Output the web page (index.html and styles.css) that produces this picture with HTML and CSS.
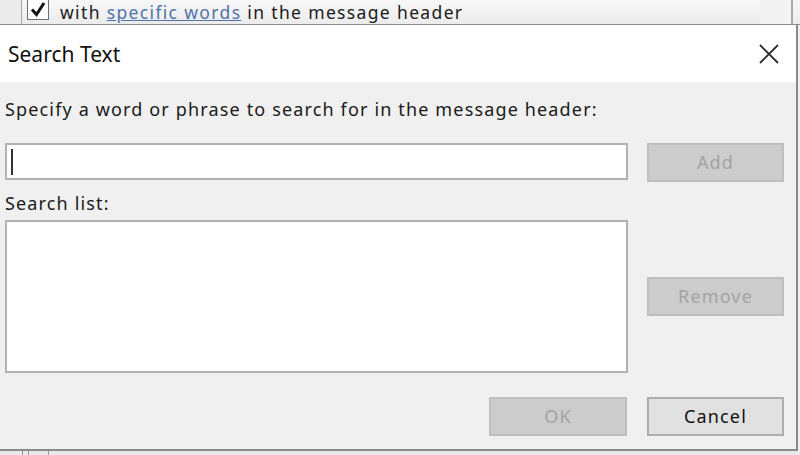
FILE: index.html
```html
<!DOCTYPE html>
<html>
<head>
<meta charset="utf-8">
<link rel="stylesheet" href="styles.css">
</head>
<body>
<div class="page">
  <div class="strip-top">
    <div class="gutter"></div>
    <div class="checkbox">
      <svg width="20" height="19" viewBox="0 0 20 19"><path d="M4 9.5 L8.5 14.5 L16 3" fill="none" stroke="#111" stroke-width="3"/></svg>
    </div>
    <div class="rule-text">with <span class="link">specific words</span> in the message header</div>
    <div class="strip-fill"></div>
    <div class="strip-col"></div>
  </div>
  <div class="dialog">
    <div class="titlebar">
      <div class="title">Search Text</div>
      <div class="close">
        <svg width="20" height="20" viewBox="0 0 20 20"><path d="M1 1 L19 19 M19 1 L1 19" stroke="#2b2b2b" stroke-width="1.8" fill="none"/></svg>
      </div>
    </div>
    <div class="content">
      <div class="prompt">Specify a word or phrase to search for in the message header:</div>
      <div class="textbox"><span class="caret"></span></div>
      <div class="btn disabled add">Add</div>
      <div class="list-label">Search list:</div>
      <div class="listbox"></div>
      <div class="btn disabled remove">Remove</div>
      <div class="btn disabled ok">OK</div>
      <div class="btn cancel">Cancel</div>
    </div>
  </div>
  <div class="strip-bottom">
    <div class="mark m1"></div>
    <div class="mark m2"></div>
    <div class="mark m3"></div>
  </div>
</div>
</body>
</html>
```
FILE: styles.css
```css
html, body {
  margin: 0;
  padding: 0;
}
body {
  width: 800px;
  height: 455px;
  overflow: hidden;
  background: #f0f0f0;
  font-family: "Noto Sans", "Open Sans", sans-serif;
  color: #1a1a1a;
}
.page {
  display: flex;
  flex-direction: column;
  height: 455px;
}
.strip-top {
  height: 24px;
  flex: none;
  display: flex;
  align-items: flex-start;
  background: linear-gradient(#f7f7f7, #ececec);
  border-bottom: 1px solid #8c8c8c;
}
.gutter {
  width: 21px;
  height: 24px;
  background: #ebebeb;
  border-right: 1px solid #a9a9a9;
}
.checkbox {
  margin-left: 5px;
  width: 20px;
  height: 19px;
  border: 1px solid #6e6e6e;
  border-top: none;
  background: #fff;
}
.checkbox svg { display: block; }
.rule-text {
  margin-left: 11px;
  font-size: 17.5px;
  line-height: 24px;
  letter-spacing: 1.35px;
  color: #1a1a1a;
}
.link {
  color: #4f73a8;
  text-decoration: underline;
}
.strip-fill { flex: 1; }
.strip-col {
  width: 31px;
  height: 24px;
  background: #f3f3f3;
  border-right: 2px solid #a8a8a8;
  margin-right: 7px;
}
.dialog {
  flex: none;
  height: 424px;
  margin-right: 2px;
  border-right: 2px solid #8a8a8a;
  border-bottom: 2px solid #8a8a8a;
  display: flex;
  flex-direction: column;
}
.titlebar {
  height: 57px;
  background: #fff;
  display: flex;
  align-items: center;
  justify-content: space-between;
  padding-left: 8px;
  padding-right: 17px;
}
.title {
  font-size: 21px;
  color: #111;
}
.close svg { display: block; }
.content {
  flex: 1;
  background: #f0f0f0;
  display: grid;
  grid-template-columns: 623px 137px;
  column-gap: 19px;
  align-content: start;
  padding-left: 5px;
  padding-top: 16px;
  font-size: 18px;
  line-height: 23px;
  letter-spacing: 1.15px;
}
.prompt {
  grid-column: 1 / -1;
  margin-bottom: 22px;
}
.textbox {
  height: 37px;
  box-sizing: border-box;
  border: 2px solid #b2b2b2;
  background: #fff;
  display: flex;
  align-items: center;
  padding-left: 4px;
}
.caret {
  width: 2px;
  height: 26px;
  background: #333;
}
.btn {
  height: 39px;
  box-sizing: border-box;
  display: flex;
  align-items: center;
  justify-content: center;
  font-size: 18px;
}
.disabled {
  background: #cccccc;
  border: 2px solid #bfbfbf;
  color: #a3a3a3;
}
.cancel {
  background: #e1e1e1;
  border: 2px solid #adadad;
  color: #111;
}
.list-label {
  grid-column: 1 / -1;
  margin-top: 10px;
  margin-bottom: 5px;
}
.listbox {
  height: 153px;
  box-sizing: border-box;
  border: 2px solid #b2b2b2;
  background: #fff;
}
.remove {
  align-self: center;
}
.ok {
  margin-top: 24px;
  width: 138px;
  justify-self: end;
  margin-right: 1px;
}
.cancel {
  margin-top: 24px;
}
.strip-bottom {
  flex: 1;
  position: relative;
  background: #e9e9e9;
}
.mark {
  position: absolute;
  top: 0;
  bottom: 0;
  width: 1px;
  background: #9a9a9a;
}
.m1 { left: 22px; }
.m2 { left: 28px; }
.m3 { left: 48px; }
```
